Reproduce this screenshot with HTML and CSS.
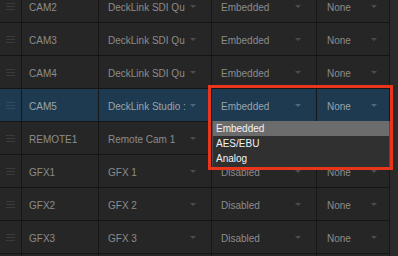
FILE: index.html
```html
<!DOCTYPE html>
<html lang="en">

<head>
  <meta charset="UTF-8">
  <meta name="viewport" content="width=device-width, initial-scale=1.0">
  <title>Inputs</title>
  <link rel="stylesheet" href="styles.css">
</head>

<body>
  <div class="screen">
    <div class="inputs">
      <div class="row">
        <div class="cell handle"><span class="grip"></span></div>
        <div class="cell name">CAM2</div>
        <div class="cell source">DeckLink SDI Qu<span class="arrow"></span></div>
        <div class="cell audio">Embedded<span class="arrow"></span></div>
        <div class="cell extra">None<span class="arrow"></span></div>
      </div>
      <div class="row">
        <div class="cell handle"><span class="grip"></span></div>
        <div class="cell name">CAM3</div>
        <div class="cell source">DeckLink SDI Qu<span class="arrow"></span></div>
        <div class="cell audio">Embedded<span class="arrow"></span></div>
        <div class="cell extra">None<span class="arrow"></span></div>
      </div>
      <div class="row">
        <div class="cell handle"><span class="grip"></span></div>
        <div class="cell name">CAM4</div>
        <div class="cell source">DeckLink SDI Qu<span class="arrow"></span></div>
        <div class="cell audio">Embedded<span class="arrow"></span></div>
        <div class="cell extra">None<span class="arrow"></span></div>
      </div>
      <div class="row active">
        <div class="cell handle"><span class="grip"></span></div>
        <div class="cell name">CAM5</div>
        <div class="cell source">DeckLink Studio :<span class="arrow"></span></div>
        <div class="cell audio">Embedded<span class="arrow"></span>
          <ul class="dropdown">
            <li class="picked">Embedded</li>
            <li>AES/EBU</li>
            <li>Analog</li>
          </ul>
        </div>
        <div class="cell extra">None<span class="arrow"></span></div>
      </div>
      <div class="row">
        <div class="cell handle"><span class="grip"></span></div>
        <div class="cell name">REMOTE1</div>
        <div class="cell source">Remote Cam 1<span class="arrow"></span></div>
        <div class="cell audio">Embedded<span class="arrow"></span></div>
        <div class="cell extra">None<span class="arrow"></span></div>
      </div>
      <div class="row">
        <div class="cell handle"><span class="grip"></span></div>
        <div class="cell name">GFX1</div>
        <div class="cell source">GFX 1<span class="arrow"></span></div>
        <div class="cell audio">Disabled<span class="arrow"></span></div>
        <div class="cell extra">None<span class="arrow"></span></div>
      </div>
      <div class="row">
        <div class="cell handle"><span class="grip"></span></div>
        <div class="cell name">GFX2</div>
        <div class="cell source">GFX 2<span class="arrow"></span></div>
        <div class="cell audio">Disabled<span class="arrow"></span></div>
        <div class="cell extra">None<span class="arrow"></span></div>
      </div>
      <div class="row">
        <div class="cell handle"><span class="grip"></span></div>
        <div class="cell name">GFX3</div>
        <div class="cell source">GFX 3<span class="arrow"></span></div>
        <div class="cell audio">Disabled<span class="arrow"></span></div>
        <div class="cell extra">None<span class="arrow"></span></div>
      </div>
      <div class="row">
        <div class="cell handle"></div>
        <div class="cell name"></div>
        <div class="cell source"></div>
        <div class="cell audio"></div>
        <div class="cell extra"></div>
      </div>
    </div>

    <div class="callout"></div>
  </div>
</body>

</html>
```

FILE: styles.css
```css
body {
  margin: 0;
  padding: 0;
  background-color: #2a2a2a;
  font-family: "Liberation Sans", Arial, sans-serif;
}

.screen {
  position: relative;
  width: 398px;
  height: 256px;
  overflow: hidden;
  background-color: #2b2b2b;
}

.inputs {
  width: 390px;
  margin-top: -11px;
}

.row {
  display: flex;
  height: 33px;
  box-sizing: border-box;
  border-top: 1px solid #151515;
  background-color: #262626;
}

.cell {
  position: relative;
  display: flex;
  align-items: center;
  box-sizing: border-box;
  padding-top: 2px;
  border-right: 1px solid #171717;
  font-size: 10px;
  color: #8c8c8c;
  white-space: nowrap;
}

.handle {
  width: 22px;
  justify-content: center;
  padding-top: 0;
}

.name {
  width: 77px;
  padding-left: 7px;
}

.source {
  width: 113px;
  padding-left: 9px;
}

.audio {
  width: 105px;
  padding-left: 9px;
}

.extra {
  width: 73px;
  padding-left: 10px;
}

.arrow {
  position: absolute;
  top: 15px;
  width: 0;
  height: 0;
  border-left: 3px solid transparent;
  border-right: 3px solid transparent;
  border-top: 3px solid #4c4c4c;
}

.source .arrow {
  left: 91px;
}

.audio .arrow {
  left: 83px;
}

.extra .arrow {
  left: 54px;
}

.grip {
  width: 9px;
  height: 5px;
  border-top: 1px solid #3b3b3b;
  border-bottom: 1px solid #3b3b3b;
  background: linear-gradient(#3b3b3b, #3b3b3b) center / 100% 1px no-repeat;
}

.active {
  background-color: #1d3a50;
}

.active .cell {
  color: #9aa4ad;
}

.active .arrow {
  border-top-color: #51667a;
}

.active .grip {
  border-color: #34495a;
  background: linear-gradient(#34495a, #34495a) center / 100% 1px no-repeat;
}

.dropdown {
  position: absolute;
  top: 32px;
  left: 0;
  width: 176px;
  margin: 0;
  padding: 0 0 1px;
  list-style: none;
  background-color: #303030;
  border: 1px solid #4a4a4a;
  border-top: 0;
  z-index: 2;
}

.dropdown li {
  height: 15px;
  line-height: 15px;
  padding-left: 3px;
  font-size: 10px;
  color: #f2f2f2;
}

.dropdown .picked {
  background-color: #6c6c6c;
}

.callout {
  position: absolute;
  left: 208px;
  top: 85px;
  width: 179px;
  height: 79px;
  border: 3px solid #e8351c;
  z-index: 3;
}
```
